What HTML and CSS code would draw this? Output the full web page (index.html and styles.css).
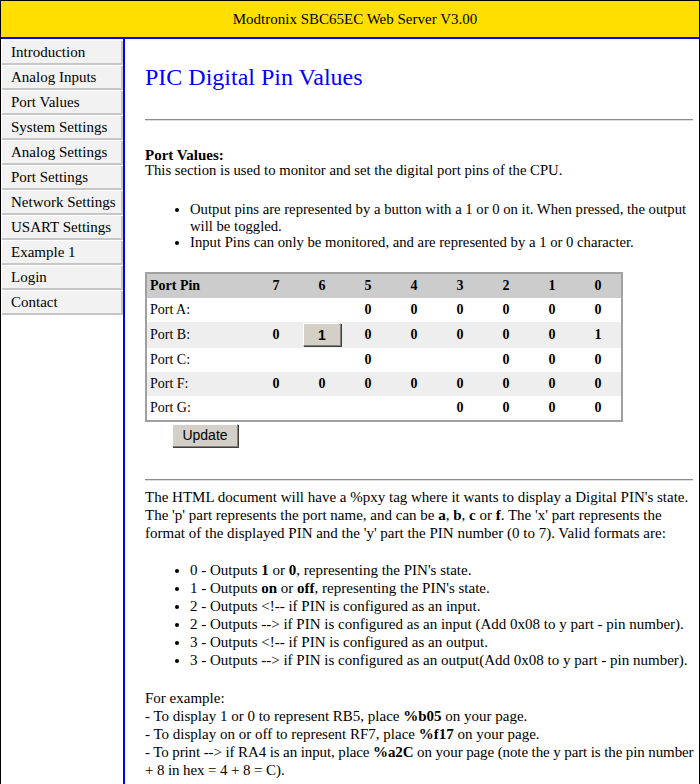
FILE: index.html
```html
<!DOCTYPE html>
<html>
<head>
<meta charset="utf-8">
<title>Modtronix SBC65EC Web Server</title>
<link rel="stylesheet" href="styles.css">
</head>
<body>
<div class="page">
  <div class="header">Modtronix SBC65EC Web Server V3.00</div>
  <div class="main">
    <nav class="sidebar">
      <a class="navbtn">Introduction</a>
      <a class="navbtn">Analog Inputs</a>
      <a class="navbtn">Port Values</a>
      <a class="navbtn">System Settings</a>
      <a class="navbtn">Analog Settings</a>
      <a class="navbtn">Port Settings</a>
      <a class="navbtn">Network Settings</a>
      <a class="navbtn">USART Settings</a>
      <a class="navbtn">Example 1</a>
      <a class="navbtn">Login</a>
      <a class="navbtn">Contact</a>
    </nav>
    <div class="content">
      <h1 class="title">PIC Digital Pin Values</h1>
      <hr class="rule rule-top">
      <div class="upper">
        <p class="intro"><b>Port Values:</b><br>This section is used to monitor and set the digital port pins of the CPU.</p>
        <ul class="list upper-list">
          <li>Output pins are represented by a button with a 1 or 0 on it. When pressed, the output will be toggled.</li>
          <li>Input Pins can only be monitored, and are represented by a 1 or 0 character.</li>
        </ul>
        <table class="pins">
          <tr class="head"><th class="lbl">Port Pin</th><th>7</th><th>6</th><th>5</th><th>4</th><th>3</th><th>2</th><th>1</th><th>0</th></tr>
          <tr class="odd"><td class="lbl">Port A:</td><td></td><td></td><td>0</td><td>0</td><td>0</td><td>0</td><td>0</td><td>0</td></tr>
          <tr class="even rowb"><td class="lbl">Port B:</td><td>0</td><td><button class="pinbtn">1</button></td><td>0</td><td>0</td><td>0</td><td>0</td><td>0</td><td>1</td></tr>
          <tr class="odd"><td class="lbl">Port C:</td><td></td><td></td><td>0</td><td></td><td></td><td>0</td><td>0</td><td>0</td></tr>
          <tr class="even"><td class="lbl">Port F:</td><td>0</td><td>0</td><td>0</td><td>0</td><td>0</td><td>0</td><td>0</td><td>0</td></tr>
          <tr class="odd"><td class="lbl">Port G:</td><td></td><td></td><td></td><td></td><td>0</td><td>0</td><td>0</td><td>0</td></tr>
        </table>
        <div class="update-row"><button class="update">Update</button></div>
      </div>
      <hr class="rule rule-mid">
      <div class="lower">
        <p>The HTML document will have a %pxy tag where it wants to display a Digital PIN's state. The 'p' part represents the port name, and can be <b>a</b>, <b>b</b>, <b>c</b> or <b>f</b>. The 'x' part represents the format of the displayed PIN and the 'y' part the PIN number (0 to 7). Valid formats are:</p>
        <ul class="list lower-list">
          <li>0 - Outputs <b>1</b> or <b>0</b>, representing the PIN's state.</li>
          <li>1 - Outputs <b>on</b> or <b>off</b>, representing the PIN's state.</li>
          <li>2 - Outputs &lt;!-- if PIN is configured as an input.</li>
          <li>2 - Outputs --&gt; if PIN is configured as an input (Add 0x08 to y part - pin number).</li>
          <li>3 - Outputs &lt;!-- if PIN is configured as an output.</li>
          <li>3 - Outputs --&gt; if PIN is configured as an output(Add 0x08 to y part - pin number).</li>
        </ul>
        <p class="examples">For example:<br>
        - To display 1 or 0 to represent RB5, place <b>%b05</b> on your page.<br>
        - To display on or off to represent RF7, place <b>%f17</b> on your page.<br>
        <span class="tight">- To print --&gt; if RA4 is an input, place <b>%a2C</b> on your page (note the y part is the pin number + 8 in hex = 4 + 8 = C).</span></p>
      </div>
    </div>
  </div>
</div>
</body>
</html>
```

FILE: styles.css
```css
html, body {
  margin: 0;
  padding: 0;
  background: #ffffff;
}
body {
  font-family: "Liberation Serif", "Times New Roman", serif;
  color: #000;
}
.page {
  border: 1px solid #000;
  border-bottom: none;
  min-height: 783px;
  display: flex;
  flex-direction: column;
}
.header {
  background: #ffdf00;
  height: 36px;
  line-height: 36px;
  padding-left: 10px;
  text-align: center;
  font-size: 15px;
  border-bottom: 2px solid #0000ff;
}
.main {
  display: flex;
  flex: 1;
}
.sidebar {
  width: 122px;
  flex: none;
  border-right: 2px solid #0000ff;
  padding-top: 2px;
  display: flex;
  flex-direction: column;
  gap: 1px;
}
.navbtn {
  display: block;
  margin-left: 1px;
  width: 110px;
  height: 22px;
  line-height: 22px;
  padding-left: 9px;
  background: #f2f2f2;
  border-right: 2px solid #c6c6c6;
  border-bottom: 2px solid #c6c6c6;
  font-size: 15px;
  color: #000;
  white-space: nowrap;
}
.content {
  flex: 1;
  padding: 0 1px 0 20px;
  min-width: 0;
}
.title {
  margin: 24px 0 0;
  font-weight: normal;
  font-size: 24px;
  line-height: 28px;
  color: #0000ff;
}
.rule {
  height: 0;
  border: none;
  border-top: 1px solid #8c8c8c;
  border-bottom: 1px solid #dcdcdc;
  margin: 0 5px 0 0;
}
.rule-top {
  margin-top: 28px;
}
.upper {
  font-size: 14.7px;
  line-height: 16px;
  padding-right: 5px;
}
.intro {
  margin: 27px 0 0;
  line-height: 15px;
}
.intro b {
  font-size: 15px;
}
.list {
  margin: 0;
  padding-left: 45px;
}
.upper-list {
  margin-top: 23px;
  line-height: 16.5px;
}
.pins {
  margin-top: 21px;
  border-collapse: collapse;
  border: 2px solid #a0a0a0;
  font-size: 14px;
}
.pins th, .pins td {
  width: 46px;
  height: 24px;
  padding: 0;
  text-align: center;
  font-weight: bold;
}
.pins .lbl {
  width: 103px;
  padding-left: 3px;
  text-align: left;
}
.pins td.lbl {
  font-weight: normal;
}
.head {
  background: #cccccc;
}
.odd {
  background: #ffffff;
}
.even {
  background: #eeeeee;
}
.rowb td {
  height: 26px;
}
.pinbtn {
  width: 38px;
  height: 23px;
  padding: 0;
  background: #d4d0c8;
  border: 1px solid;
  border-color: #ffffff #808080 #808080 #ffffff;
  box-shadow: 1px 1px 0 #404040;
  font-family: "Liberation Sans", Arial, sans-serif;
  font-weight: bold;
  font-size: 14px;
  color: #000;
}
.update-row {
  padding: 2px 0 0 27px;
}
.update {
  width: 66px;
  height: 23px;
  padding: 0;
  background: #d4d0c8;
  border: 1px solid;
  border-color: #ffffff #808080 #808080 #ffffff;
  box-shadow: 1px 1px 0 #404040;
  font-family: "Liberation Sans", Arial, sans-serif;
  font-size: 14px;
  color: #000;
}
.rule-mid {
  margin-top: 32px;
}
.lower {
  font-size: 15px;
  line-height: 18px;
}
.lower p {
  margin: 7px 5px 0 0;
}
.lower-list {
  margin-top: 19px;
}
.lower .examples {
  margin: 20px 0 0;
}
.tight {
  letter-spacing: -0.11px;
}
```
